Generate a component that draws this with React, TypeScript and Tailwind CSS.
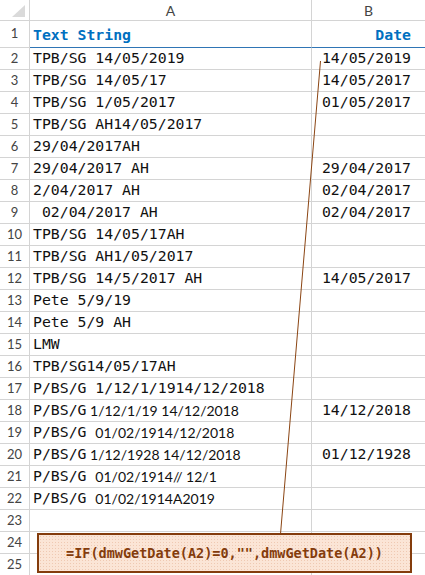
import React from "react";

const MONO = "font-['DejaVu_Sans_Mono',monospace]";
const SANS = "font-['Lato','Noto_Sans',sans-serif]";

type Row = { n: number; a?: React.ReactNode; b?: string };

const mixed = (rest: string, monoSpace: boolean) => (
  <>
    <span>{monoSpace ? "P/BS/G " : "P/BS/G"}</span>
    <span className={`${SANS} text-[14px]`}>{monoSpace ? rest : " " + rest}</span>
  </>
);

const rows: Row[] = [
  { n: 2, a: "TPB/SG 14/05/2019", b: "14/05/2019" },
  { n: 3, a: "TPB/SG 14/05/17", b: "14/05/2017" },
  { n: 4, a: "TPB/SG 1/05/2017", b: "01/05/2017" },
  { n: 5, a: "TPB/SG AH14/05/2017" },
  { n: 6, a: "29/04/2017AH" },
  { n: 7, a: "29/04/2017 AH", b: "29/04/2017" },
  { n: 8, a: "2/04/2017 AH", b: "02/04/2017" },
  { n: 9, a: " 02/04/2017 AH", b: "02/04/2017" },
  { n: 10, a: "TPB/SG 14/05/17AH" },
  { n: 11, a: "TPB/SG AH1/05/2017" },
  { n: 12, a: "TPB/SG 14/5/2017 AH", b: "14/05/2017" },
  { n: 13, a: "Pete 5/9/19" },
  { n: 14, a: "Pete 5/9 AH" },
  { n: 15, a: "LMW" },
  { n: 16, a: "TPB/SG14/05/17AH" },
  { n: 17, a: "P/BS/G 1/12/1/1914/12/2018" },
  { n: 18, a: mixed("1/12/1/19 14/12/2018", false), b: "14/12/2018" },
  { n: 19, a: mixed("01/02/1914/12/2018", true) },
  { n: 20, a: mixed("1/12/1928 14/12/2018", false), b: "01/12/1928" },
  { n: 21, a: mixed("01/02/1914// 12/1", true) },
  { n: 22, a: mixed("01/02/1914A2019", true) },
  { n: 23 },
  { n: 24 },
  { n: 25 },
];

export default function App() {
  return (
    <div className="relative w-[425px] h-[575px] overflow-hidden bg-white text-[#111]">
      {/* Column headers */}
      <div className="flex h-[21px] border-b border-[#d4d4d4]">
        <div className="relative w-[30px] shrink-0 border-r border-[#d4d4d4]">
          <svg className="absolute left-0 top-0" width="29" height="20" viewBox="0 0 29 20">
            <polygon points="25,5 25,17 12,17" fill="#dadada" />
          </svg>
        </div>
        <div className={`w-[282px] shrink-0 border-r border-[#d4d4d4] flex items-center justify-center ${SANS} text-[14px] text-[#444]`}>
          A
        </div>
        <div className={`flex-1 flex items-center justify-center ${SANS} text-[14px] text-[#444]`}>
          B
        </div>
      </div>

      {/* Row 1 */}
      <div className="flex h-[27px]">
        <div className={`w-[30px] shrink-0 border-r border-b border-[#d4d4d4] flex items-end justify-center pb-[4px] ${SANS} text-[13px] text-[#444]`}>
          1
        </div>
        <div className={`w-[282px] shrink-0 border-r border-[#d4d4d4] border-b border-b-[#2f75b5] flex items-end pl-[3px] pb-[4px] ${MONO} text-[14.8px] font-bold text-[#0070c0] leading-none`}>
          Text String
        </div>
        <div className={`flex-1 border-b border-[#2f75b5] flex items-end justify-end pr-[14px] pb-[4px] ${MONO} text-[14.8px] font-bold text-[#0070c0] leading-none`}>
          Date
        </div>
      </div>

      {rows.map((r) => (
        <div key={r.n} className="flex h-[22px] border-b border-[#d4d4d4]">
          <div className={`w-[30px] shrink-0 border-r border-[#d4d4d4] flex items-center justify-center ${SANS} text-[13px] text-[#444]`}>
            {r.n}
          </div>
          <div className={`w-[282px] shrink-0 border-r border-[#d4d4d4] flex items-center pl-[3px] whitespace-pre overflow-visible ${MONO} text-[14.8px] leading-none`}>
            {r.a}
          </div>
          <div className={`flex-1 flex items-center justify-end pr-[14px] whitespace-pre ${MONO} text-[14.8px] leading-none`}>
            {r.b}
          </div>
        </div>
      ))}

      {/* Connector line */}
      <svg className="absolute left-0 top-0 pointer-events-none" width="425" height="575" viewBox="0 0 425 575">
        <line x1="320.5" y1="61" x2="280.5" y2="534" stroke="#8b4513" strokeWidth="1" />
      </svg>

      {/* Callout */}
      <div className="absolute left-[37px] top-[533px] w-[375px] h-[40px] border-2 border-[#843c0c] bg-[#fbe5d6] bg-[radial-gradient(#efc9b2_0.7px,transparent_0.8px)] bg-[length:3px_3px] flex items-center justify-center">
        <span className={`${MONO} font-bold text-[13.5px] text-[#843c0c] whitespace-pre`}>
          =IF(dmwGetDate(A2)=0,"",dmwGetDate(A2))
        </span>
      </div>
    </div>
  );
}
